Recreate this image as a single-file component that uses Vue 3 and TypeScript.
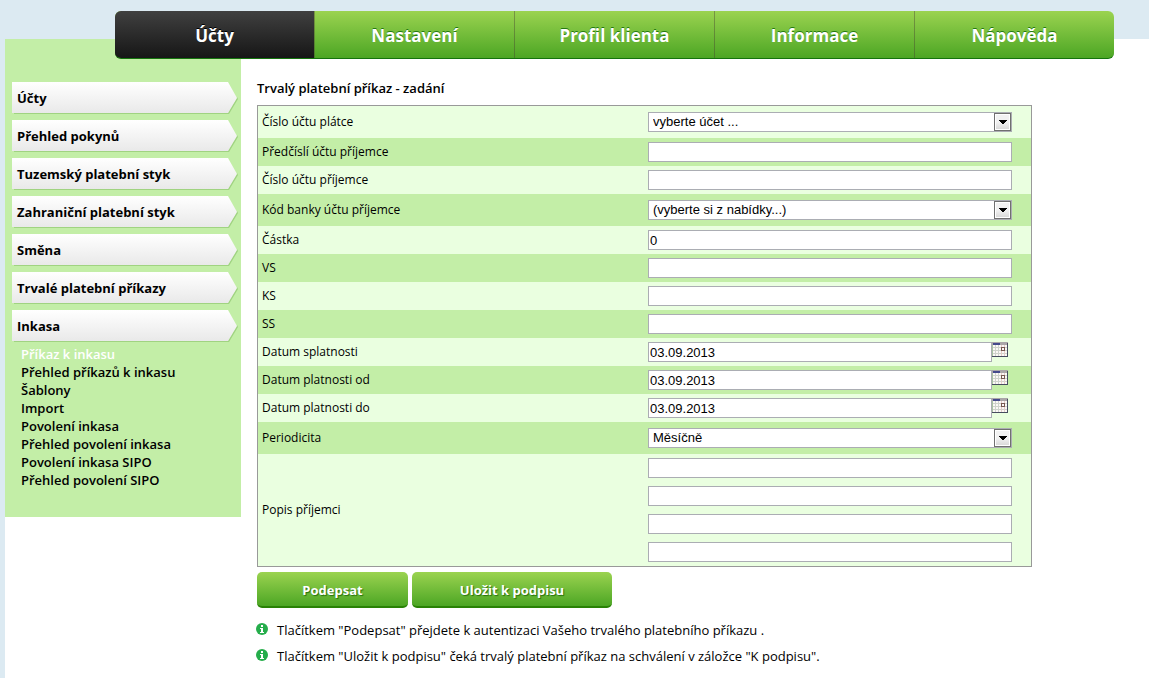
<script setup lang="ts">
import { reactive } from 'vue'

interface Row {
  id: string
  label: string
  kind: 'text' | 'select' | 'date' | 'lines'
  options?: string[]
}

const tabs: string[] = ['Účty', 'Nastavení', 'Profil klienta', 'Informace', 'Nápověda']
const sections: string[] = [
  'Účty',
  'Přehled pokynů',
  'Tuzemský platební styk',
  'Zahraniční platební styk',
  'Směna',
  'Trvalé platební příkazy',
  'Inkasa',
]
const subItems: string[] = [
  'Příkaz k inkasu',
  'Přehled příkazů k inkasu',
  'Šablony',
  'Import',
  'Povolení inkasa',
  'Přehled povolení inkasa',
  'Povolení inkasa SIPO',
  'Přehled povolení SIPO',
]

const rows: Row[] = [
  { id: 'payer', label: 'Číslo účtu plátce', kind: 'select', options: ['vyberte účet ...'] },
  { id: 'prefix', label: 'Předčíslí účtu příjemce', kind: 'text' },
  { id: 'account', label: 'Číslo účtu příjemce', kind: 'text' },
  { id: 'bank', label: 'Kód banky účtu příjemce', kind: 'select', options: ['(vyberte si z nabídky...)'] },
  { id: 'amount', label: 'Částka', kind: 'text' },
  { id: 'vs', label: 'VS', kind: 'text' },
  { id: 'ks', label: 'KS', kind: 'text' },
  { id: 'ss', label: 'SS', kind: 'text' },
  { id: 'due', label: 'Datum splatnosti', kind: 'date' },
  { id: 'from', label: 'Datum platnosti od', kind: 'date' },
  { id: 'to', label: 'Datum platnosti do', kind: 'date' },
  { id: 'period', label: 'Periodicita', kind: 'select', options: ['Měsíčně'] },
  { id: 'note', label: 'Popis příjemci', kind: 'lines' },
]

const values = reactive<Record<string, string>>({
  payer: 'vyberte účet ...',
  prefix: '',
  account: '',
  bank: '(vyberte si z nabídky...)',
  amount: '0',
  vs: '',
  ks: '',
  ss: '',
  due: '03.09.2013',
  from: '03.09.2013',
  to: '03.09.2013',
  period: 'Měsíčně',
})
const noteLines = reactive<string[]>(['', '', '', ''])

const hints: string[] = [
  'Tlačítkem "Podepsat" přejdete k autentizaci Vašeho trvalého platebního příkazu .',
  'Tlačítkem "Uložit k podpisu" čeká trvalý platební příkaz na schválení v záložce "K podpisu".',
]
</script>

<template>
  <div class="page">
    <header class="top">
      <nav class="tabs" aria-label="Hlavní nabídka">
        <a v-for="(tab, i) in tabs" :key="tab" href="#" class="tab" :class="{ active: i === 0 }">{{ tab }}</a>
      </nav>
    </header>

    <div class="body">
      <aside class="side">
        <nav class="sections" aria-label="Účty">
          <a v-for="s in sections" :key="s" href="#" class="section">
            <svg class="arrow" viewBox="0 0 226 32" preserveAspectRatio="none" aria-hidden="true">
              <defs>
                <linearGradient id="sec" x1="0" y1="0" x2="0" y2="1">
                  <stop offset="0" stop-color="#ffffff" />
                  <stop offset="1" stop-color="#e9e9e9" />
                </linearGradient>
              </defs>
              <path d="M2 32H217L226 17L225 15L216 31H2Z" fill="#a0d381" />
              <path d="M0 0H216L225 16L216 31H0Z" fill="url(#sec)" />
            </svg>
            <span class="section-text">{{ s }}</span>
          </a>
        </nav>
        <ul class="sub">
          <li v-for="(s, i) in subItems" :key="s">
            <a href="#" :class="{ current: i === 0 }">{{ s }}</a>
          </li>
        </ul>
      </aside>

      <main class="main">
        <h1 class="title">Trvalý platební příkaz - zadání</h1>
        <form @submit.prevent>
          <div class="grid">
            <div v-for="row in rows" :key="row.id" class="row" :class="row.kind">
              <label class="label" :for="row.id">{{ row.label }}</label>
              <div class="field">
                <div v-if="row.kind === 'select'" class="pick">
                  <select :id="row.id" v-model="values[row.id]" class="box">
                    <option v-for="o in row.options" :key="o">{{ o }}</option>
                  </select>
                  <span class="drop">
                    <svg width="8" height="4" viewBox="0 0 8 4" shape-rendering="crispEdges" aria-hidden="true">
                      <path d="M0 0H8V1H7V2H6V3H5V4H3V3H2V2H1V1H0Z" fill="#000" />
                    </svg>
                  </span>
                </div>
                <template v-else-if="row.kind === 'date'">
                  <input :id="row.id" v-model="values[row.id]" class="box" type="text" />
                  <button class="cal" type="button" aria-label="Kalendář">
                    <svg width="16" height="15" viewBox="0 0 16 15" shape-rendering="crispEdges" aria-hidden="true">
                      <path d="M0 0H16V15H0Z" fill="#fbf8f6" />
                      <path d="M0 0H16V3H0Z" fill="#aaa6a8" />
                      <path d="M1 1H8V3H1Z" fill="#454a8c" />
                      <path d="M0 5H15V6H0ZM0 8H15V9H0ZM0 11H15V12H0ZM3 3H4V14H3ZM6 3H7V14H6Z" fill="#cfd3cc" />
                      <path d="M9 3H10V14H9ZM12 3H13V14H12Z" fill="#e5cdc9" />
                      <path d="M9 5H13V9H9ZM10 6V8H12V6Z" fill="#785951" fill-rule="evenodd" />
                      <path d="M15 1H16V15H0V14H15Z" fill="#474c60" />
                      <path d="M0 3H1V14H0Z" fill="#a9c3a2" />
                    </svg>
                  </button>
                </template>
                <template v-else-if="row.kind === 'lines'">
                  <input
                    v-for="(_, i) in noteLines"
                    :id="i === 0 ? row.id : row.id + i"
                    :key="i"
                    v-model="noteLines[i]"
                    class="box"
                    type="text"
                    :aria-label="row.label + ' ' + (i + 1)"
                  />
                </template>
                <input v-else :id="row.id" v-model="values[row.id]" class="box" type="text" />
              </div>
            </div>
          </div>
          <div class="actions">
            <button class="btn sign" type="submit">Podepsat</button>
            <button class="btn save" type="button">Uložit k podpisu</button>
          </div>
        </form>
        <p v-for="h in hints" :key="h" class="hint">
          <svg class="info" width="12" height="12" viewBox="0 0 12 12" aria-hidden="true">
            <circle cx="6" cy="6" r="6" fill="#25ad4b" />
            <path d="M5 2H7V4H5ZM4 5H7V9H8V10H4V9H5V6H4Z" fill="#fff" shape-rendering="crispEdges" />
          </svg>
          <span>{{ h }}</span>
        </p>
      </main>
    </div>
  </div>
</template>

<style>
body {
  background: #fff;
}
</style>

<style scoped>
.page {
  box-sizing: border-box;
  min-height: 100vh;
  border-left: 5px solid #dceaf2;
  font-family: 'Trebuchet MS', 'Open Sans', 'Noto Sans', sans-serif;
  color: #000;
}
a {
  color: inherit;
  text-decoration: none;
}
.top {
  height: 39px;
  box-sizing: border-box;
  padding: 11px 35px 0 110px;
  background: #dceaf2;
}
.tabs {
  position: relative;
  display: flex;
  height: 48px;
  box-sizing: border-box;
  border-radius: 6px;
  overflow: hidden;
  border-bottom: 1px solid #14740d;
  background: linear-gradient(#9bd350, #4ca624);
}
.tab {
  flex: 1;
  box-sizing: border-box;
  border-left: 1px solid rgba(70, 60, 50, 0.4);
  text-align: center;
  font-size: 17px;
  font-weight: 700;
  line-height: 50px;
  color: #fff;
  text-shadow: 0 -1px 0 #237a10;
}
.tab.active {
  border-left: 0;
  background: linear-gradient(#404040, #161616);
  text-shadow: 0 -1px 0 #000;
}
.body {
  display: flex;
  align-items: flex-start;
}
.side {
  flex: 0 0 236px;
  box-sizing: border-box;
  padding: 43px 3px 28px 7px;
  background: #c3eea7;
}
.sections {
  display: flex;
  flex-direction: column;
  gap: 6px;
}
.section {
  display: grid;
  height: 32px;
  font-size: 13px;
  font-weight: 700;
  line-height: 32px;
}
.arrow,
.section-text {
  grid-area: 1 / 1;
}
.arrow {
  width: 100%;
  height: 32px;
}
.section-text {
  z-index: 1;
  padding-left: 5px;
}
.sub {
  margin: 3px 0 0;
  padding: 0 0 0 9px;
  list-style: none;
  font-size: 13px;
  font-weight: 600;
  line-height: 18px;
}
.current {
  color: #fff;
}
.main {
  flex: 1;
  min-width: 0;
  padding: 39px 117px 0 16px;
}
.title {
  margin: 0 0 7px;
  font-size: 13px;
  font-weight: 600;
  line-height: 20px;
}
.grid {
  border: 1px solid #999;
  background: #eaffe0;
}
.row {
  display: grid;
  grid-template-columns: 386px minmax(0, 1fr);
  align-items: center;
  padding: 4px 0;
}
.row:nth-child(even) {
  background: #c3eea7;
}
.row.select {
  padding: 6px 0;
}
.label {
  padding-left: 4px;
  font-size: 12px;
  line-height: 18px;
}
.field {
  display: flex;
  align-items: flex-start;
  padding: 0 19px 0 4px;
}
.lines .field {
  flex-direction: column;
  gap: 8px;
}
.box {
  display: block;
  width: 100%;
  min-width: 0;
  height: 20px;
  box-sizing: border-box;
  margin: 0;
  padding: 0 1px;
  border: 1px solid #abadb3;
  border-radius: 0;
  background: #fff;
  color: #000;
  font: 13px/18px 'Liberation Sans', Arial, sans-serif;
}
.pick {
  position: relative;
  width: 100%;
}
select.box {
  appearance: none;
  padding: 0 20px 0 4px;
}
.drop {
  position: absolute;
  top: 1px;
  right: 1px;
  display: flex;
  align-items: center;
  justify-content: center;
  width: 17px;
  height: 18px;
  box-sizing: border-box;
  border: 1px solid #707070;
  background: linear-gradient(#f2f2f2 50%, #d6d6d6);
  box-shadow: inset 0 0 0 1px #fff;
  pointer-events: none;
}
.date .field {
  padding-right: 23px;
}
.cal {
  display: block;
  flex: none;
  padding: 0;
  border: 0;
  background: none;
  line-height: 0;
}
.actions {
  display: flex;
  gap: 4px;
  margin: 5px 0 9px;
}
.btn {
  height: 36px;
  padding: 2px 0 0;
  border: 0;
  border-bottom: 2px solid #298205;
  border-radius: 5px;
  background: linear-gradient(#9bd350, #4ca624);
  color: #fff;
  font: 700 13px/32px 'Trebuchet MS', 'Open Sans', sans-serif;
  text-shadow: 1px 1px 1px #26720c;
}
.sign {
  width: 151px;
}
.save {
  width: 200px;
}
.hint {
  display: flex;
  align-items: center;
  gap: 9px;
  margin: 0 -40px 0 -1px;
  font-size: 13px;
  line-height: 26px;
}
.info {
  margin-bottom: 3px;
}
</style>
